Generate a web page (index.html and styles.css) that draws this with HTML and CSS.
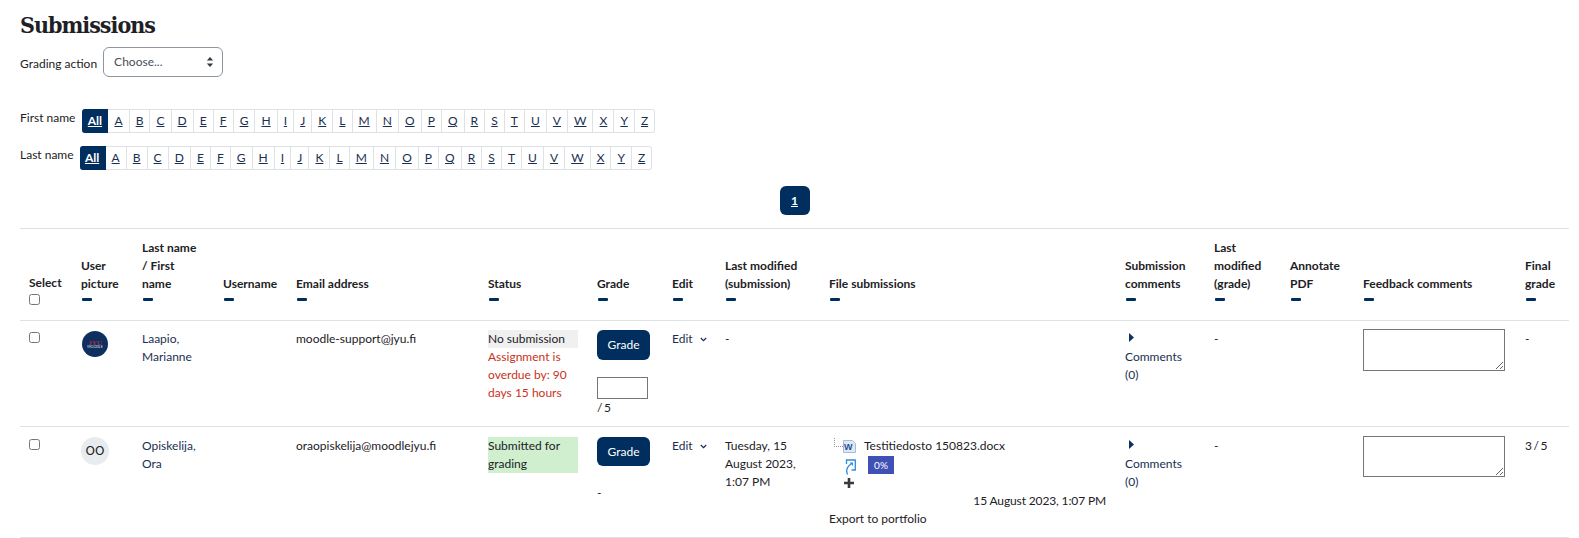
FILE: index.html
```html
<!DOCTYPE html>
<html lang="en">
<head>
<meta charset="utf-8">
<title>Submissions</title>
<link rel="stylesheet" href="styles.css">
</head>
<body>
<h2 class="title">Submissions</h2>
<form class="action-row">
  <label class="action-label" for="ga">Grading action</label>
  <span class="select-wrap">
    <select id="ga" class="select"><option>Choose...</option></select>
    <svg class="select-caret" width="8" height="12" viewBox="0 0 8 12"><path d="M4 1l3.2 3.6H.8zM4 11L.8 7.4h6.4z" fill="#343a40"/></svg>
  </span>
</form>

<div class="initials first">
  <span class="initials-label">First name</span>
  <div class="letters">
    <a class="letter active">All</a><a class="letter">A</a><a class="letter">B</a><a class="letter">C</a><a class="letter">D</a><a class="letter">E</a><a class="letter">F</a><a class="letter">G</a><a class="letter">H</a><a class="letter">I</a><a class="letter">J</a><a class="letter">K</a><a class="letter">L</a><a class="letter">M</a><a class="letter">N</a><a class="letter">O</a><a class="letter">P</a><a class="letter">Q</a><a class="letter">R</a><a class="letter">S</a><a class="letter">T</a><a class="letter">U</a><a class="letter">V</a><a class="letter">W</a><a class="letter">X</a><a class="letter">Y</a><a class="letter">Z</a>
  </div>
</div>
<div class="initials last">
  <span class="initials-label">Last name</span>
  <div class="letters">
    <a class="letter active">All</a><a class="letter">A</a><a class="letter">B</a><a class="letter">C</a><a class="letter">D</a><a class="letter">E</a><a class="letter">F</a><a class="letter">G</a><a class="letter">H</a><a class="letter">I</a><a class="letter">J</a><a class="letter">K</a><a class="letter">L</a><a class="letter">M</a><a class="letter">N</a><a class="letter">O</a><a class="letter">P</a><a class="letter">Q</a><a class="letter">R</a><a class="letter">S</a><a class="letter">T</a><a class="letter">U</a><a class="letter">V</a><a class="letter">W</a><a class="letter">X</a><a class="letter">Y</a><a class="letter">Z</a>
  </div>
</div>

<nav class="pager"><a class="page">1</a></nav>

<table class="grid">
  <colgroup>
    <col class="c1"><col class="c2"><col class="c3"><col class="c4"><col class="c5"><col class="c6"><col class="c7"><col class="c8"><col class="c9"><col class="c10"><col class="c11"><col class="c12"><col class="c13"><col class="c14"><col class="c15">
  </colgroup>
  <thead>
    <tr class="head-row">
      <th class="select-head">Select<input type="checkbox" class="check head-check"></th>
      <th>User picture<i class="dash"></i></th>
      <th class="name-head">Last name / First name<i class="dash"></i></th>
      <th>Username<i class="dash"></i></th>
      <th>Email address<i class="dash"></i></th>
      <th>Status<i class="dash"></i></th>
      <th>Grade<i class="dash"></i></th>
      <th>Edit<i class="dash"></i></th>
      <th>Last modified (submission)<i class="dash"></i></th>
      <th>File submissions<i class="dash"></i></th>
      <th>Submission comments<i class="dash"></i></th>
      <th>Last modified (grade)<i class="dash"></i></th>
      <th>Annotate PDF<i class="dash"></i></th>
      <th>Feedback comments<i class="dash"></i></th>
      <th>Final grade<i class="dash"></i></th>
    </tr>
  </thead>
  <tbody>
    <tr class="row-one">
      <td><input type="checkbox" class="check"></td>
      <td><span class="avatar logo"><span class="logo-top">JYU</span><span class="logo-sub">MOODLE</span></span></td>
      <td><a class="link">Laapio, Marianne</a></td>
      <td></td>
      <td>moodle-support@jyu.fi</td>
      <td><div class="status none">No submission</div><div class="overdue">Assignment is overdue by: 90 days 15 hours</div></td>
      <td>
        <a class="btn">Grade</a>
        <input type="text" class="grade-input">
        <div class="outof">/ 5</div>
      </td>
      <td><a class="link edit">Edit<svg class="chev" width="7" height="5" viewBox="0 0 7 5"><path d="M.8 1l2.7 2.7L6.2 1" fill="none" stroke="#0f2f5f" stroke-width="1.2"/></svg></a></td>
      <td>-</td>
      <td></td>
      <td class="comments"><svg class="tri" width="5" height="9" viewBox="0 0 5 9"><path d="M0 0l5 4.5L0 9z" fill="#0f2f5f"/></svg><div class="link">Comments (0)</div></td>
      <td>-</td>
      <td></td>
      <td><textarea class="feedback"></textarea></td>
      <td>-</td>
    </tr>
    <tr class="row-two">
      <td><input type="checkbox" class="check"></td>
      <td><span class="avatar initials-pic">OO</span></td>
      <td><a class="link">Opiskelija, Ora</a></td>
      <td></td>
      <td>oraopiskelija@moodlejyu.fi</td>
      <td><div class="status ok">Submitted for grading</div></td>
      <td>
        <a class="btn">Grade</a>
        <div class="nograde">-</div>
      </td>
      <td><a class="link edit">Edit<svg class="chev" width="7" height="5" viewBox="0 0 7 5"><path d="M.8 1l2.7 2.7L6.2 1" fill="none" stroke="#0f2f5f" stroke-width="1.2"/></svg></a></td>
      <td>Tuesday, 15 August 2023, 1:07 PM</td>
      <td>
        <div class="file-line">
          <i class="tree"></i>
          <svg class="doc" width="13" height="13" viewBox="0 0 13 13"><path d="M.5.5h9l3 3v9H.5z" fill="#dfe8f5" stroke="#a9bcd6"/><text x="1" y="10" class="doc-w">W</text></svg>
          <a class="file-name">Testitiedosto 150823.docx</a>
        </div>
        <div class="plugin-line">
          <svg class="turn" width="11" height="16" viewBox="0 0 11 16"><path d="M1.500 5V1h8.800v10H6.500" fill="none" stroke="#2a8ce0" stroke-width="1.300"/><path d="M4.500 3.500h3.500V7z" fill="#2a8ce0"/><path d="M6 5C2.500 7.500.5 11 2.500 15.500" fill="none" stroke="#2a8ce0" stroke-width="1.300"/></svg>
          <span class="badge">0%</span>
        </div>
        <svg class="plus" width="10" height="10" viewBox="0 0 10 10"><path d="M3.700 0h2.600v3.700H10v2.600H6.300V10H3.700V6.300H0V3.700h3.700z" fill="#343a40"/></svg>
        <div class="file-date">15 August 2023, 1:07 PM</div>
        <a class="export">Export to portfolio</a>
      </td>
      <td class="comments"><svg class="tri" width="5" height="9" viewBox="0 0 5 9"><path d="M0 0l5 4.500L0 9z" fill="#0f2f5f"/></svg><div class="link">Comments (0)</div></td>
      <td>-</td>
      <td></td>
      <td><textarea class="feedback"></textarea></td>
      <td class="final">3 / 5</td>
    </tr>
  </tbody>
</table>
</body>
</html>
```
FILE: styles.css
```css
* { box-sizing: border-box; }
html, body { margin: 0; padding: 0; background: #fff; }
body {
  padding: 0 10px 0 20px;
  font-family: Lato, "Liberation Sans", sans-serif;
  font-size: 12px;
  line-height: 18px;
  color: #1d2125;
  overflow: hidden;
}
.title {
  margin: 0;
  padding-top: 9px;
  height: 47px;
  font-family: "DejaVu Serif Condensed", "DejaVu Serif", serif;
  font-size: 23px;
  line-height: 32px;
  font-weight: 700;
  letter-spacing: -1px;
  color: #1d2125;
}
.action-row { display: flex; align-items: center; height: 30px; gap: 6px; }
.action-label { padding-top: 4px; }
.select-wrap { position: relative; display: block; height: 30px; }
.select {
  appearance: none;
  width: 120px;
  height: 30px;
  padding: 0 10px 1px;
  background: #fff;
  border: 1px solid #8f959e;
  border-radius: 6px;
  font: 12px/18px Lato, sans-serif;
  color: #495057;
}
.select-caret { position: absolute; right: 9px; top: 9px; }
.initials { display: flex; align-items: flex-start; }
.initials.first { margin-top: 32px; gap: 7px; }
.initials.last { margin-top: 13px; gap: 6px; }
.initials-label { line-height: 18px; }
.letters { display: flex; height: 24px; border-radius: 3px; }
.letter {
  height: 24px;
  padding: 0 6.04px;
  border: 1px solid #dee2e6;
  border-left-width: 0;
  line-height: 22px;
  color: #1a2f52;
  text-decoration: underline;
  background: #fff;
}
.letter:last-child { border-radius: 0 3px 3px 0; }
.letter.active {
  width: 26px;
  padding: 0;
  text-align: center;
  background: #002f5f;
  border-color: #002f5f;
  color: #fff;
  font-weight: 700;
  border-radius: 3px 0 0 3px;
}
.pager { display: flex; justify-content: center; margin-top: 16px; height: 42px; }
.page {
  width: 30px;
  height: 29px;
  border-radius: 6px;
  background: #002f5f;
  color: #fff;
  font-weight: 700;
  text-align: center;
  line-height: 29px;
  text-decoration: underline;
}
.grid { width: 1549px; border-collapse: collapse; table-layout: fixed; }
.c1 { width: 52px; }
.c2 { width: 61px; }
.c3 { width: 81px; }
.c4 { width: 73px; }
.c5 { width: 192px; }
.c6 { width: 109px; }
.c7 { width: 75px; }
.c8 { width: 53px; }
.c9 { width: 104px; }
.c10 { width: 296px; }
.c11 { width: 89px; }
.c12 { width: 76px; }
.c13 { width: 73px; }
.c14 { width: 162px; }
.c15 { width: 53px; }
th {
  padding: 0 9px 19px;
  vertical-align: bottom;
  text-align: left;
  font-weight: 700;
  color: #1d2125;
  border-top: 1px solid #dee2e6;
}
.select-head { padding-bottom: 15px; }
.name-head { padding-right: 16px; }
td {
  padding: 9px 9px 0;
  vertical-align: top;
  border-top: 1px solid #dee2e6;
  border-bottom: 1px solid #dee2e6;
}
.head-row { height: 92px; }
.row-one { height: 106px; }
.row-two { height: 111px; }
.row-two td { padding-top: 10px; }
.dash {
  display: block;
  width: 10px;
  height: 3px;
  margin: 5px 0 0 1px;
  border-radius: 1px;
  background: #002f5f;
}
.check {
  display: block;
  width: 11px;
  height: 11px;
  margin: 2px 0 0;
}
.avatar {
  display: flex;
  flex-direction: column;
  align-items: center;
  justify-content: center;
  border-radius: 50%;
}
.logo {
  width: 26px;
  height: 26px;
  margin: 1px 0 0 1px;
  background: #0f2f5f;
}
.logo-top { font-family: "Liberation Serif", serif; font-size: 7px; line-height: 6px; font-weight: 700; color: #a0303f; }
.logo-sub { font-size: 3.5px; line-height: 3px; color: #dfe4ee; }
.initials-pic {
  width: 28px;
  height: 28px;
  background: #e9ecef;
  font-family: "DejaVu Sans", sans-serif;
  font-size: 12px;
  color: #1d2125;
}
.link { color: #1a2f52; }
.status { width: 90px; }
.status.none { background: #f0f0f0; }
.status.ok { background: #cfefcf; }
.overdue { color: #ca3120; }
.btn {
  display: block;
  width: 53px;
  height: 30px;
  border-radius: 6px;
  background: #002f5f;
  color: #fff;
  text-align: center;
  line-height: 30px;
  font-size: 12px;
}
.row-two .btn { height: 29px; line-height: 29px; }
.grade-input {
  display: block;
  width: 51px;
  height: 22px;
  margin-top: 17px;
  border: 1px solid #767676;
  padding: 0;
}
.outof { word-spacing: -1.5px; }
.final { word-spacing: -1.5px; }
.nograde { margin-top: 18px; }
.edit { display: flex; align-items: center; }
.chev { margin-left: 7px; }
.tri { display: block; margin: 3px 0 6px 4px; }
.feedback {
  display: block;
  width: 142px;
  height: 42px;
  margin: -1px 0 0;
  border: 1px solid #767676;
  padding: 2px;
}
.row-two .feedback { height: 41px; }
.file-line { display: flex; align-items: flex-start; height: 18px; }
.tree {
  width: 9px;
  height: 9px;
  margin-top: 1px;
  margin-left: 5px;
  border-left: 1px dotted #999;
  border-bottom: 1px dotted #999;
}
.doc { margin-top: 3px; flex: none; }
.doc-w { font-family: "Liberation Sans", sans-serif; font-size: 9px; font-weight: 700; fill: #1f4f9f; }
.file-name { margin-left: 8px; color: #1d2125; line-height: 18px; }
.plugin-line { display: flex; align-items: flex-start; height: 23px; margin-left: 16px; }
.turn { margin-top: 4px; }
.badge {
  width: 26px;
  height: 18px;
  margin-left: 12px;
  margin-top: 1px;
  background: #3f51b5;
  color: #fff;
  font-size: 10px;
  line-height: 18px;
  text-align: center;
}
.plus { display: block; margin-left: 15px; }
.file-date { text-align: right; margin-top: 4px; height: 18px; letter-spacing: -.13px; margin-right: 1px; }
.export { display: block; color: #1d2125; }
```
